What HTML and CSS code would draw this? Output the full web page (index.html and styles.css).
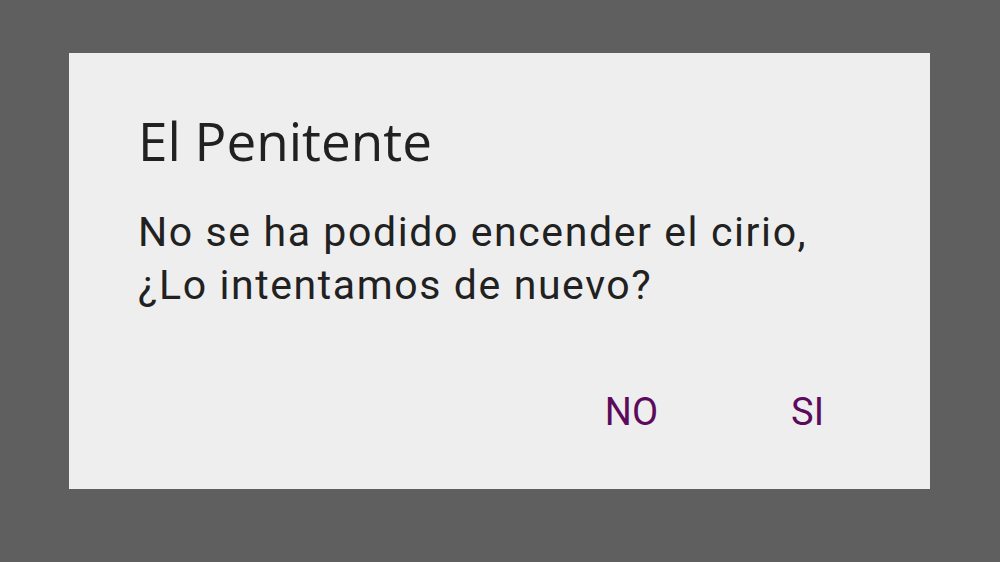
FILE: index.html
```html
<!DOCTYPE html>
<html lang="es">

<head>
  <meta charset="UTF-8">
  <meta name="viewport" content="width=device-width, initial-scale=1.0">
  <link rel="stylesheet" href="styles.css">
  <title>El Penitente</title>
</head>

<body>

  <!-- dialogo -->
  <div class="dialog">
    <h1 class="dialog-title">El Penitente</h1>
    <p class="dialog-message">No se ha podido encender el cirio,<br>¿Lo intentamos de nuevo?</p>
    <div class="dialog-buttons">
      <button class="dialog-button">NO</button>
      <button class="dialog-button">SI</button>
    </div>
  </div>

</body>

</html>
```

FILE: styles.css
```css
body {
  margin: 0;
  background-color: #5f5f5f;
  font-family: Roboto, "Liberation Sans", sans-serif;
  color: #212121;
}

.dialog {
  width: 861px;
  height: 436px;
  margin: 53px 0 0 69px;
  background-color: #eeeeee;
  box-sizing: border-box;
  padding: 56px 0 0 69px;
}

.dialog-title {
  font-family: "Open Sans", "Noto Sans", sans-serif;
  font-weight: normal;
  font-size: 53px;
  line-height: 64px;
  margin: 0;
}

.dialog-message {
  font-size: 41px;
  letter-spacing: 1.6px; /* el Roboto antiguo era mas ancho */
  line-height: 53px;
  margin: 33px 0 0;
}

.dialog-buttons {
  display: flex;
  justify-content: flex-end;
  gap: 133px;
  margin-top: 74px;
  padding-right: 106px;
}

.dialog-button {
  background: none;
  border: none;
  padding: 0;
  font-family: Roboto, "Liberation Sans", sans-serif;
  font-size: 38px;
  line-height: 53px;
  color: #5c0a5c;
  cursor: pointer;
}
```
